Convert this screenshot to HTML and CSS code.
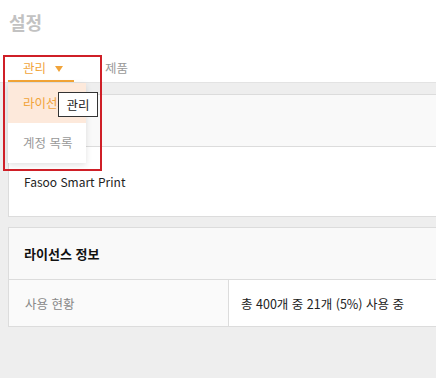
FILE: index.html
```html
<!DOCTYPE html>
<html lang="ko">
<head>
<meta charset="utf-8">
<link rel="stylesheet" href="styles.css">
</head>
<body>
<header class="top">
  <h1 class="title">설정</h1>
  <nav class="tabs">
    <div class="tab active">관리<svg class="caret" width="8" height="6" viewBox="0 0 8 6"><path d="M0 0H8L4 6Z" fill="#f1a43a"/></svg></div>
    <div class="tab second">제품</div>
  </nav>
</header>
<main class="content">
  <section class="card">
    <div class="card-head"></div>
    <div class="card-body">Fasoo Smart Print</div>
  </section>
  <section class="card card-gap">
    <div class="card-head"><h2 class="card-title">라이선스 정보</h2></div>
    <div class="row">
      <div class="cell label">사용 현황</div>
      <div class="cell value">총 400개 중 21개 (5%) 사용 중</div>
    </div>
  </section>
</main>
<ul class="menu">
  <li class="menu-item selected">라이선스</li>
  <li class="menu-item">계정 목록</li>
</ul>
<div class="tooltip">관리</div>
<div class="highlight"></div>
</body>
</html>
```
FILE: styles.css
```css
* { box-sizing: border-box; }
html, body { margin: 0; padding: 0; }
body {
  font-family: "Noto Sans CJK KR", "Noto Sans", sans-serif;
  background: #eeeeee;
  width: 436px;
  height: 378px;
  overflow: hidden;
  position: relative;
  color: #222;
}
.top {
  background: #fff;
  height: 82px;
  padding: 10px 8px 0;
}
.title {
  margin: 0;
  font-size: 18px;
  line-height: 24px;
  font-weight: 700;
  color: #c2c2c2;
  padding-left: 1px;
}
.tabs {
  display: flex;
  margin-top: 20px;
  height: 28px;
}
.tab {
  font-size: 12.5px;
  line-height: 24px;
  padding: 2px 15px 0;
  color: #999;
  height: 28px;
  white-space: nowrap;
  border-bottom: 2px solid transparent;
}
.tab.second { margin-left: 16px; }
.tab.active {
  display: flex;
  align-items: center;
  align-self: flex-start;
  color: #f1a43a;
  border-bottom-color: #f3a536;
  width: 66px;
  padding-right: 0;
}
.caret {
  margin-left: 9px;
  margin-top: 1px;
  flex: none;
}
.content {
  border-top: 1px solid #e3e3e3;
  padding: 11px 0 0 8px;
}
.card {
  background: #fff;
  border: 1px solid #dcdcdc;
  border-right: none;
}
.card-gap { margin-top: 10px; }
.card-head {
  background: #f9f9f9;
  height: 52px;
  border-bottom: 1px solid #dcdcdc;
  padding-left: 15px;
  display: flex;
  align-items: center;
}
.card-title {
  margin: 0;
  font-size: 13px;
  font-weight: 700;
  color: #111;
}
.card-body {
  height: 69px;
  padding-left: 15px;
  display: flex;
  align-items: center;
  font-size: 12px;
  color: #222;
}
.row {
  display: grid;
  grid-template-columns: 220px 1fr;
  height: 46px;
}
.cell {
  display: flex;
  align-items: center;
  font-size: 12.5px;
}
.label {
  background: #fafafa;
  color: #888;
  padding-left: 16px;
  border-right: 1px solid #dcdcdc;
}
.value {
  padding-left: 12px;
  color: #222;
}
.menu {
  position: absolute;
  left: 8px;
  top: 83px;
  width: 78px;
  margin: 0;
  padding: 0;
  list-style: none;
  background: #fff;
  box-shadow: 0 2px 6px rgba(0,0,0,0.12);
}
.menu-item {
  height: 40px;
  line-height: 40px;
  padding-left: 15px;
  font-size: 12.5px;
  color: #999;
  white-space: nowrap;
  overflow: hidden;
}
.menu-item.selected {
  background: #fde9db;
  color: #f1a43a;
}
.tooltip {
  position: absolute;
  left: 58px;
  top: 92px;
  width: 40px;
  height: 25px;
  border: 1px solid #333;
  background: #fff;
  font-size: 12.5px;
  line-height: 23px;
  text-align: center;
  color: #222;
}
.highlight {
  position: absolute;
  left: 3px;
  top: 55px;
  width: 99px;
  height: 116px;
  border: 2px solid #cf1f27;
  pointer-events: none;
}
```
